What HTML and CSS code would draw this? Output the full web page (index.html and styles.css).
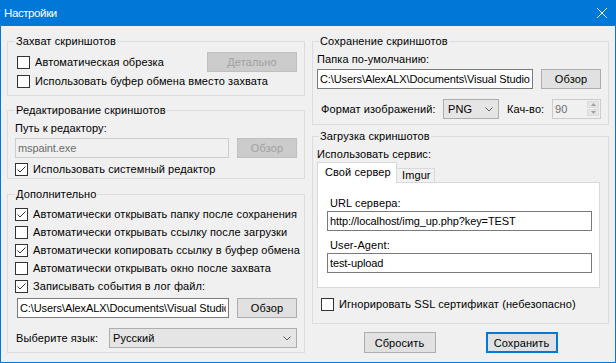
FILE: index.html
```html
<!DOCTYPE html>
<html lang="ru">
<head>
    <meta charset="UTF-8">
    <meta name="viewport" content="width=device-width, initial-scale=1.0">
    <title>Настройки</title>
    <link rel="stylesheet" href="styles.css">
</head>
<body>
    <div class="window">
        <div class="titlebar">
            <span class="title">Настройки</span>
            <svg class="close" width="10" height="10" viewBox="0 0 10 10"><path d="M0 0L10 10M10 0L0 10" stroke="#fff" stroke-width="1"/></svg>
        </div>

        <div class="content">
            <div class="column">
                <div class="group capture">
                    <div class="group-title">Захват скриншотов</div>
                    <div class="row row-first">
                        <label class="check"><span class="box"></span>Автоматическая обрезка</label>
                        <button class="btn btn-details" disabled>Детально</button>
                    </div>
                    <div class="row">
                        <label class="check"><span class="box"></span>Использовать буфер обмена вместо захвата</label>
                    </div>
                </div>

                <div class="group editor">
                    <div class="group-title">Редактирование скриншотов</div>
                    <div class="field-label">Путь к редактору:</div>
                    <div class="field">
                        <input class="textbox" type="text" value="mspaint.exe" disabled>
                        <button class="btn btn-browse" disabled>Обзор</button>
                    </div>
                    <div class="row row-sys">
                        <label class="check"><span class="box checked"><svg width="11" height="11" viewBox="0 0 11 11"><path d="M1.5 5.5L4 8L9.5 2.5" fill="none" stroke="#333" stroke-width="1"/></svg></span>Использовать системный редактор</label>
                    </div>
                </div>

                <div class="group extra">
                    <div class="group-title">Дополнительно</div>
                    <div class="row row-first-extra">
                        <label class="check"><span class="box checked"><svg width="11" height="11" viewBox="0 0 11 11"><path d="M1.5 5.5L4 8L9.5 2.5" fill="none" stroke="#333" stroke-width="1"/></svg></span>Автоматически открывать папку после сохранения</label>
                    </div>
                    <div class="row">
                        <label class="check"><span class="box"></span>Автоматически открывать ссылку после загрузки</label>
                    </div>
                    <div class="row">
                        <label class="check"><span class="box checked"><svg width="11" height="11" viewBox="0 0 11 11"><path d="M1.5 5.5L4 8L9.5 2.5" fill="none" stroke="#333" stroke-width="1"/></svg></span>Автоматически копировать ссылку в буфер обмена</label>
                    </div>
                    <div class="row">
                        <label class="check"><span class="box"></span>Автоматически открывать окно после захвата</label>
                    </div>
                    <div class="row">
                        <label class="check"><span class="box checked"><svg width="11" height="11" viewBox="0 0 11 11"><path d="M1.5 5.5L4 8L9.5 2.5" fill="none" stroke="#333" stroke-width="1"/></svg></span>Записывать события в лог файл:</label>
                    </div>
                    <div class="field field-log">
                        <input class="textbox" type="text" value="C:\Users\AlexALX\Documents\Visual Studio 2015\Projects">
                        <button class="btn btn-browse">Обзор</button>
                    </div>
                    <div class="lang-row">
                        <span class="lang-label">Выберите язык:</span>
                        <div class="combo combo-lang">
                            <span>Русский</span>
                            <svg width="8" height="5" viewBox="0 0 8 5"><path d="M0.5 0.5L4 4L7.5 0.5" fill="none" stroke="#606060" stroke-width="1"/></svg>
                        </div>
                    </div>
                </div>
            </div>

            <div class="column">
                <div class="group saving">
                    <div class="group-title">Сохранение скриншотов</div>
                    <div class="field-label">Папка по-умолчанию:</div>
                    <div class="field">
                        <input class="textbox" type="text" value="C:\Users\AlexALX\Documents\Visual Studio 2015\Projects">
                        <button class="btn btn-browse">Обзор</button>
                    </div>
                    <div class="format-row">
                        <span class="format-label">Формат изображений:</span>
                        <div class="combo combo-format">
                            <span>PNG</span>
                            <svg width="8" height="5" viewBox="0 0 8 5"><path d="M0.5 0.5L4 4L7.5 0.5" fill="none" stroke="#606060" stroke-width="1"/></svg>
                        </div>
                        <span class="quality-label">Кач-во:</span>
                        <div class="spin">
                            <span class="spin-value">90</span>
                            <div class="spin-buttons">
                                <span class="spin-btn"><svg width="5" height="3" viewBox="0 0 5 3"><path d="M0 3L2.5 0L5 3Z" fill="#a0a0a0"/></svg></span>
                                <span class="spin-btn"><svg width="5" height="3" viewBox="0 0 5 3"><path d="M0 0L2.5 3L5 0Z" fill="#a0a0a0"/></svg></span>
                            </div>
                        </div>
                    </div>
                </div>

                <div class="group upload">
                    <div class="group-title">Загрузка скриншотов</div>
                    <div class="field-label">Использовать сервис:</div>
                    <div class="tabs">
                        <div class="tab tab-active">Свой сервер</div>
                        <div class="tab tab-inactive">Imgur</div>
                    </div>
                    <div class="tab-panel">
                        <div class="panel-label">URL сервера:</div>
                        <input class="textbox panel-input" type="text" value="http://localhost/img_up.php?key=TEST">
                        <div class="panel-label panel-label-second">User-Agent:</div>
                        <input class="textbox panel-input" type="text" value="test-upload">
                    </div>
                    <div class="row row-ssl">
                        <label class="check"><span class="box"></span>Игнорировать SSL сертификат (небезопасно)</label>
                    </div>
                </div>

                <div class="actions">
                    <button class="btn btn-action">Сбросить</button>
                    <button class="btn btn-action btn-default">Сохранить</button>
                </div>
            </div>
        </div>
    </div>
</body>
</html>
```

FILE: styles.css
```css
body {
    margin: 0;
    font-family: "Liberation Sans", Arial, sans-serif;
    font-size: 11px;
    letter-spacing: 0.1px;
    line-height: 14px;
    color: #000;
}

.window {
    width: 616px;
    height: 363px;
    box-sizing: border-box;
    border: 1px solid #0078d7;
    border-top: none;
    background: #f0f0f0;
    display: flex;
    flex-direction: column;
}

.titlebar {
    height: 26px;
    flex-shrink: 0;
    background: #0078d7;
    color: #fff;
    display: flex;
    align-items: center;
    justify-content: space-between;
}
.title {
    margin-left: 3px;
    font-size: 11.5px;
    letter-spacing: -0.4px;
}
.close {
    margin-right: 8px;
}

.content {
    display: grid;
    grid-template-columns: 298px 297px;
    column-gap: 7px;
    align-items: start;
    padding: 15px 0 0 6px;
}
.column {
    display: flex;
    flex-direction: column;
}

/* group boxes */
.group {
    border: 1px solid #dcdcdc;
    padding: 0 7px;
}
.group-title {
    width: fit-content;
    margin-top: -8px;
    padding: 0 1px;
    background: #f0f0f0;
}
.capture {
    padding: 0 7px 5px 9px;
}
.capture .group-title {
    margin-left: -2px;
}
.editor {
    margin-top: 14px;
}
.extra {
    margin-top: 15px;
    padding-bottom: 4px;
}
.saving {
    padding: 0 7px 5px 4px;
}
.upload {
    margin-top: 11px;
    padding: 0 7px 10px 4px;
}
.saving .group-title,
.upload .group-title {
    margin-left: 2px;
}

/* checkbox rows */
.row {
    height: 18px;
    display: flex;
    align-items: center;
    justify-content: space-between;
}
.row-first {
    height: 20px;
    margin-top: 4px;
}
.row-sys {
    margin-top: 2px;
}
.row-first-extra {
    margin-top: 4px;
}
.row-ssl {
    margin-top: 7px;
    margin-left: 4px;
}
.check {
    display: flex;
    align-items: center;
    white-space: nowrap;
}
.box {
    width: 13px;
    height: 13px;
    box-sizing: border-box;
    border: 1px solid #333;
    background: #fff;
    margin-right: 5px;
    display: flex;
}

/* fields */
.field-label {
    margin-top: 4px;
}
.field {
    margin-top: 3px;
    display: flex;
    gap: 8px;
}
.field-log {
    margin-left: 2px;
}
.textbox {
    flex: 1;
    min-width: 0;
    height: 20px;
    box-sizing: border-box;
    margin: 0;
    border: 1px solid #7a7a7a;
    padding: 0 2px;
    background: #fff;
    font: inherit;
    letter-spacing: -0.1px;
    color: #000;
    outline: none;
}
.textbox:disabled {
    border-color: #ccc;
    background: #f0f0f0;
    color: #6d6d6d;
}

/* buttons */
.btn {
    height: 20px;
    box-sizing: border-box;
    margin: 0;
    padding: 0;
    border: 1px solid #adadad;
    background: #e1e1e1;
    font: inherit;
    letter-spacing: inherit;
    color: #000;
}
.btn:disabled {
    border-color: #bfbfbf;
    background: #ccc;
    color: #a0a0a0;
}
.btn-details {
    width: 90px;
}
.btn-browse {
    width: 60px;
}
.btn-action {
    width: 72px;
    height: 21px;
}
.btn-default {
    border: 2px solid #0078d7;
}
.actions {
    margin-top: 8px;
    display: flex;
    justify-content: center;
    gap: 50px;
}

/* combo boxes */
.combo {
    height: 20px;
    box-sizing: border-box;
    border: 1px solid #adadad;
    background: #e5e5e5;
    display: flex;
    align-items: center;
    justify-content: space-between;
}
.lang-row {
    margin-top: 10px;
    height: 20px;
    display: flex;
    align-items: center;
    justify-content: space-between;
}
.lang-label {
    margin-left: 1px;
}
.combo-lang {
    width: 188px;
    padding: 0 5px 0 3px;
}
.format-row {
    margin-top: 10px;
    height: 20px;
    display: flex;
    align-items: center;
    white-space: nowrap;
}
.format-label {
    width: 122px;
    margin-left: 4px;
}
.combo-format {
    width: 56px;
    padding: 0 5px 0 4px;
}
.quality-label {
    margin-left: 8px;
}
.spin {
    margin-left: auto;
    width: 49px;
    height: 20px;
    box-sizing: border-box;
    border: 1px solid #ccc;
    background: #f0f0f0;
    display: flex;
    justify-content: space-between;
    color: #6d6d6d;
}
.spin-value {
    padding: 2px 0 0 2px;
}
.spin-buttons {
    display: flex;
    flex-direction: column;
    gap: 1px;
    padding: 1px 1px 0 0;
}
.spin-btn {
    width: 12px;
    height: 7px;
    background: #e5e5e5;
    border: 1px solid #dcdcdc;
    box-sizing: border-box;
    display: flex;
    align-items: center;
    justify-content: center;
}

/* tabs */
.tabs {
    margin-top: 1px;
    width: 283px;
    height: 21px;
    display: flex;
    align-items: flex-end;
}
.tabs::after {
    content: "";
    flex: 1;
    border-bottom: 1px solid #d9d9d9;
}
.tab {
    box-sizing: border-box;
    border: 1px solid #d9d9d9;
    white-space: nowrap;
}
.tab-active {
    width: 80px;
    height: 21px;
    border-bottom: none;
    background: #fff;
    padding: 2px 0 0 7px;
}
.tab-inactive {
    width: 38px;
    height: 15px;
    border-left: none;
    background: #f0f0f0;
    padding-left: 5px;
    line-height: 13px;
}
.tab-panel {
    width: 283px;
    box-sizing: border-box;
    border: 1px solid #d9d9d9;
    border-top: none;
    background: #fff;
    padding: 13px 7px 14px 9px;
    display: flex;
    flex-direction: column;
}
.panel-label {
    margin-left: 3px;
}
.panel-label-second {
    margin-top: 7px;
}
.panel-input {
    flex: none;
    margin-top: 1px;
}
```
